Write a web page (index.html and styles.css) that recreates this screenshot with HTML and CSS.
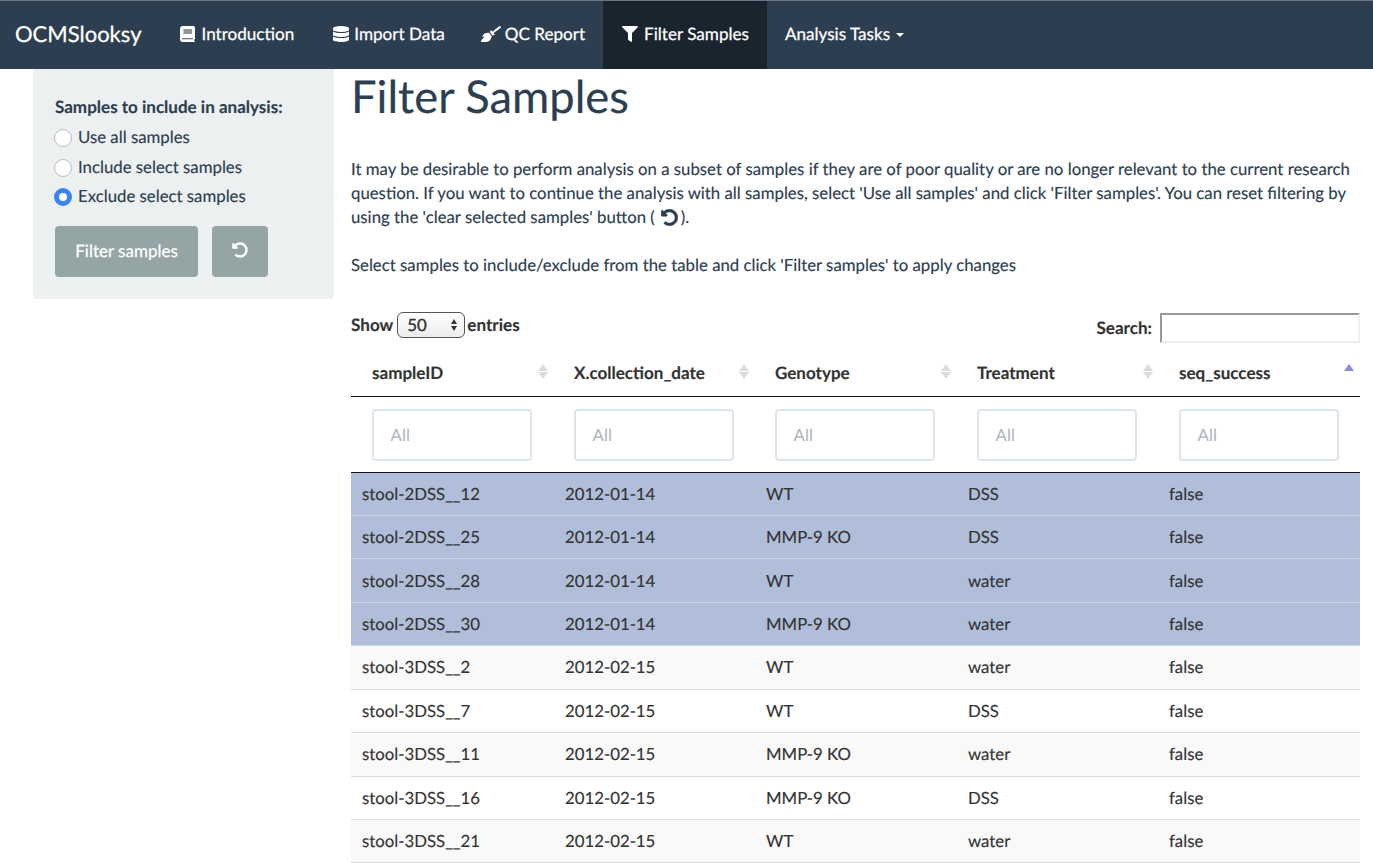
FILE: index.html
```html
<!DOCTYPE html>
<html lang="en">
<head>
<meta charset="utf-8">
<title>OCMSlooksy</title>
<link rel="stylesheet" href="styles.css">
</head>
<body>
<nav class="navbar">
  <a class="brand">OCMSlooksy</a>
  <a class="nav-item"><svg class="ico ico-book" viewBox="0 0 15 16"><path d="M3 0h10.5A1.5 1.5 0 0 1 15 1.500V12.500a1 1 0 0 1-.6 .9c-.3 .5-.3 1 0 1.500a.7 .7 0 0 1 .6 .6A.5 .5 0 0 1 14.500 16H3a3 3 0 0 1-3-3V3a3 3 0 0 1 3-3z"/><rect class="book-page" x="3.500" y="3" width="8.500" height="5"/><rect class="book-line" x="2" y="12.300" width="11" height=".9"/></svg>Introduction</a>
  <a class="nav-item item-db"><svg class="ico ico-db" viewBox="0 0 448 512" preserveAspectRatio="none"><path d="M448 73.143v45.714C448 159.143 347.667 192 224 192S0 159.143 0 118.857V73.143C0 32.857 100.333 0 224 0s224 32.857 224 73.143zM448 176v102.857C448 319.143 347.667 352 224 352S0 319.143 0 278.857V176c48.125 33.143 136.208 48.572 224 48.572S399.874 209.143 448 176zm0 160v102.857C448 479.143 347.667 512 224 512S0 479.143 0 438.857V336c48.125 33.143 136.208 48.572 224 48.572S399.874 369.143 448 336z"/></svg>Import Data</a>
  <a class="nav-item"><svg class="ico ico-brush" viewBox="0 0 640 512"><path d="M256.47 216.77l86.73 109.18s-16.6 102.36-76.57 150.12C206.66 523.85 0 510.19 0 510.19s3.8-23.14 11-55.43l94.62-112.17c3.97-4.7-.87-11.62-6.65-9.5l-60.4 22.09c14.44-41.66 32.72-80.04 54.6-97.47 59.97-47.76 163.3-40.94 163.3-40.94zM636.53 31.03l-19.86-25c-5.49-6.9-15.52-8.05-22.41-2.56l-232.48 177.8-34.14-42.97c-5.09-6.41-15.14-5.21-18.59 2.21l-25.33 54.55 86.73 109.18 58.8-12.45c8-1.69 11.42-11.2 6.34-17.6l-34.09-42.92 232.48-177.8c6.89-5.48 8.04-15.53 2.55-22.44z"/></svg>QC Report</a>
  <a class="nav-item active"><svg class="ico ico-filter" viewBox="0 0 512 512"><path d="M487.976 0H24.028C2.71 0-8.047 25.866 7.058 40.971L192 225.941V432c0 7.831 3.821 15.17 10.237 19.662l80 55.98C298.02 518.69 320 507.493 320 487.98V225.941l184.947-184.97C520.021 25.896 509.338 0 487.976 0z"/></svg>Filter Samples</a>
  <a class="nav-item">Analysis Tasks<span class="caret"></span></a>
</nav>
<div class="page">
  <aside class="sidebar">
    <div class="well">
      <div class="well-title">Samples to include in analysis:</div>
      <label class="radio"><span class="dot"></span>Use all samples</label>
      <label class="radio"><span class="dot"></span>Include select samples</label>
      <label class="radio"><span class="dot on"></span>Exclude select samples</label>
      <div class="actions">
        <button class="btn btn-filter">Filter samples</button>
        <button class="btn btn-undo"><svg class="undo" viewBox="0 0 512 512"><path d="M255.545 8c-66.269.119-126.438 26.233-170.86 68.685L48.971 40.971C33.851 25.851 8 36.559 8 57.941V192c0 13.255 10.745 24 24 24h134.059c21.382 0 32.09-25.851 16.971-40.971l-41.75-41.75c30.864-28.899 70.801-44.907 113.23-45.273 92.398-.798 170.283 73.977 169.484 169.442C423.236 348.009 349.816 424 256 424c-41.127 0-79.997-14.678-110.63-41.556-4.743-4.161-11.906-3.908-16.368.553L89.34 422.659c-4.872 4.872-4.631 12.815.482 17.433C133.798 479.813 192.074 504 256 504c136.966 0 247.999-111.033 248-247.998C504.001 119.193 392.354 7.755 255.545 8z"/></svg></button>
      </div>
    </div>
  </aside>
  <main class="main">
    <h1 class="title">Filter Samples</h1>
    <p class="intro">It may be desirable to perform analysis on a subset of samples if they are of poor quality or are no longer relevant to the current research question. If you want to continue the analysis with all samples, select 'Use all samples' and click 'Filter samples'. You can reset filtering by using the 'clear selected samples' button (<svg class="undo-inline" viewBox="0 0 512 512"><path d="M255.545 8c-66.269.119-126.438 26.233-170.86 68.685L48.971 40.971C33.851 25.851 8 36.559 8 57.941V192c0 13.255 10.745 24 24 24h134.059c21.382 0 32.09-25.851 16.971-40.971l-41.75-41.75c30.864-28.899 70.801-44.907 113.23-45.273 92.398-.798 170.283 73.977 169.484 169.442C423.236 348.009 349.816 424 256 424c-41.127 0-79.997-14.678-110.63-41.556-4.743-4.161-11.906-3.908-16.368.553L89.34 422.659c-4.872 4.872-4.631 12.815.482 17.433C133.798 479.813 192.074 504 256 504c136.966 0 247.999-111.033 248-247.998C504.001 119.193 392.354 7.755 255.545 8z"/></svg>).</p>
    <p class="hint">Select samples to include/exclude from the table and click 'Filter samples' to apply changes</p>
    <div class="controls">
      <div class="length">Show <span class="select"><span class="select-val">50</span><span class="updown"><i class="up"></i><i class="down"></i></span></span> entries</div>
      <div class="search">Search: <span class="search-box"></span></div>
    </div>
    <table class="dt">
      <thead>
        <tr class="head">
          <th>sampleID<span class="sort"><i class="up"></i><i class="down"></i></span></th>
          <th>X.collection_date<span class="sort"><i class="up"></i><i class="down"></i></span></th>
          <th>Genotype<span class="sort"><i class="up"></i><i class="down"></i></span></th>
          <th>Treatment<span class="sort"><i class="up"></i><i class="down"></i></span></th>
          <th>seq_success<span class="sort sorted"><i class="up"></i></span></th>
        </tr>
        <tr class="filters">
          <td><div class="filter">All</div></td>
          <td><div class="filter">All</div></td>
          <td><div class="filter">All</div></td>
          <td><div class="filter">All</div></td>
          <td><div class="filter">All</div></td>
        </tr>
      </thead>
      <tbody>
        <tr class="sel"><td>stool-2DSS__12</td><td>2012-01-14</td><td>WT</td><td>DSS</td><td>false</td></tr>
        <tr class="sel"><td>stool-2DSS__25</td><td>2012-01-14</td><td>MMP-9 KO</td><td>DSS</td><td>false</td></tr>
        <tr class="sel"><td>stool-2DSS__28</td><td>2012-01-14</td><td>WT</td><td>water</td><td>false</td></tr>
        <tr class="sel"><td>stool-2DSS__30</td><td>2012-01-14</td><td>MMP-9 KO</td><td>water</td><td>false</td></tr>
        <tr class="odd"><td>stool-3DSS__2</td><td>2012-02-15</td><td>WT</td><td>water</td><td>false</td></tr>
        <tr><td>stool-3DSS__7</td><td>2012-02-15</td><td>WT</td><td>DSS</td><td>false</td></tr>
        <tr class="odd"><td>stool-3DSS__11</td><td>2012-02-15</td><td>MMP-9 KO</td><td>water</td><td>false</td></tr>
        <tr><td>stool-3DSS__16</td><td>2012-02-15</td><td>MMP-9 KO</td><td>DSS</td><td>false</td></tr>
        <tr class="odd"><td>stool-3DSS__21</td><td>2012-02-15</td><td>WT</td><td>water</td><td>false</td></tr>
      </tbody>
    </table>
  </main>
</div>
</body>
</html>
```
FILE: styles.css
```css
* { box-sizing: border-box; }
html, body { margin: 0; padding: 0; height: 863px; overflow: hidden; }
body { font-family: Lato, "Liberation Sans", sans-serif; font-size: 16.8px; line-height: 24px; color: #2c3e50; background: #fff; text-rendering: geometricPrecision; -webkit-text-stroke: .15px; }

.navbar { display: flex; align-items: stretch; height: 69px; background: #2c3e50; border-top: 1px solid #6b7682; color: #fff; }
.brand { font-size: 22px; line-height: 65px; padding: 0 21px 0 15px; -webkit-text-stroke: .25px; }
.nav-item { display: flex; align-items: center; padding: 0 18px 2px; font-size: 17.1px; -webkit-text-stroke: .25px; white-space: nowrap; }
.nav-item.active { background: #1a242f; }
.item-db { padding-left: 21px; }
.ico { fill: #fff; height: 16px; margin-right: 6px; flex: none; }
.ico-book { width: 15px; }
.book-page { fill: #8b96a2; }
.book-line { fill: #2c3e50; }
.ico-db { width: 16px; margin-right: 5px; }
.ico-brush { width: 20px; margin-right: 4px; }
.ico-filter { width: 16px; margin-left: 1px; }
.caret { display: inline-block; width: 0; height: 0; margin-left: 6px; margin-top: 2px; border-top: 4px solid #fff; border-left: 4px solid transparent; border-right: 4px solid transparent; }

.page { display: flex; align-items: flex-start; }
.sidebar { width: 351px; padding-left: 33px; flex: none; }
.well { width: 301px; height: 230px; background: #ecf0f1; border-radius: 0 0 4px 4px; padding: 27px 22px 0; }
.well-title { font-weight: 700; font-size: 17.05px; line-height: 22px; margin-bottom: 4.4px; }
.radio { display: flex; align-items: center; height: 29.5px; }
.dot { width: 18px; height: 18px; border-radius: 50%; background: #fff; border: 1.5px solid #bdbdbd; margin: 2px 6px 0 -1px; flex: none; }
.dot.on { border: 5.5px solid #3b82f6; }
.actions { display: flex; gap: 14px; margin-top: 15.1px; }
.btn { height: 51px; border: 0; border-radius: 4px; background: #95a5a6; color: #fff; font-family: inherit; font-size: 17px; padding: 0 0 2px; display: flex; align-items: center; justify-content: center; -webkit-text-stroke: .25px; text-rendering: geometricPrecision; }
.btn-filter { width: 143px; }
.btn-undo { width: 56px; }
.undo { width: 16px; height: 16px; fill: #fff; }
.undo-inline { width: 17px; height: 17px; fill: #2c3e50; stroke: #2c3e50; stroke-width: 16px; vertical-align: -3px; margin: 0 3px 0 6px; }

.main { width: 1009px; flex: none; }
.title { font-size: 45.3px; font-weight: 400; line-height: 54px; margin: 0; color: #2c3e50; }
.intro { margin: 34px 0 0; width: 1009px; }
.hint { margin: 24px 0 0; }

.controls { display: flex; justify-content: space-between; height: 46px; margin-top: 35px; color: #333; font-weight: 700; font-size: 17.1px; }
.length { display: flex; align-items: center; height: 26px; gap: 4px; }
.select { display: inline-flex; justify-content: space-between; align-items: center; width: 68px; height: 26px; margin: 0 -2px 0 0; border: 1px solid #555; border-radius: 6px; background: linear-gradient(#fff, #ececec); font-weight: 400; padding: 0 7px 0 9px; font-size: 16.8px; -webkit-text-stroke: .35px; }
.updown { display: inline-flex; flex-direction: column; gap: 2px; }
.updown .up { border-bottom: 5px solid #333; border-left: 3.5px solid transparent; border-right: 3.5px solid transparent; }
.updown .down { border-top: 5px solid #333; border-left: 3.5px solid transparent; border-right: 3.5px solid transparent; }
.search { display: flex; gap: 8px; align-items: center; height: 30px; margin-top: 1px; }
.search-box { width: 200px; height: 30px; background: #fff; border: 2px solid #efefef; border-top-color: #999; border-left-color: #999; }

.dt { width: 1009px; border-collapse: collapse; table-layout: fixed; color: #333; }
.dt th { position: relative; width: 202px; height: 38px; padding: 0 0 11px 21px; text-align: left; font-weight: 700; font-size: 17.05px; border-bottom: 1px solid #111; vertical-align: bottom; }
.dt th:nth-child(2) { width: 201px; }
.sort { position: absolute; right: 5px; top: 6px; display: flex; flex-direction: column; gap: 1px; width: 10px; }
.sort.sorted { right: 6px; }
.sort .up { border-bottom: 7.5px solid #dcdcdc; border-left: 5px solid transparent; border-right: 5px solid transparent; }
.sort .down { border-top: 7.5px solid #dcdcdc; border-left: 5px solid transparent; border-right: 5px solid transparent; }
.sort.sorted .up { border-bottom-color: #8a8ad8; }
.filters td { height: 76px; padding: 2px 0 0 21px; border-bottom: 1px solid #111; }
.filter { width: 160px; height: 52px; border: 2px solid #dce4ec; border-radius: 4px; background: #fff; color: #acb6c0; padding: 0 0 0 16.6px; line-height: 48px; -webkit-text-stroke: 0; }
tbody td { height: 43.45px; padding: 0 0 0 12px; border-bottom: 1px solid #ddd; }
tbody td:first-child, tbody td:last-child { padding-left: 11px; }
tbody .odd td { background: #f9f9f9; }
tbody .sel td { background: #b0bed9; border-bottom-color: #cfd7e6; }
```
